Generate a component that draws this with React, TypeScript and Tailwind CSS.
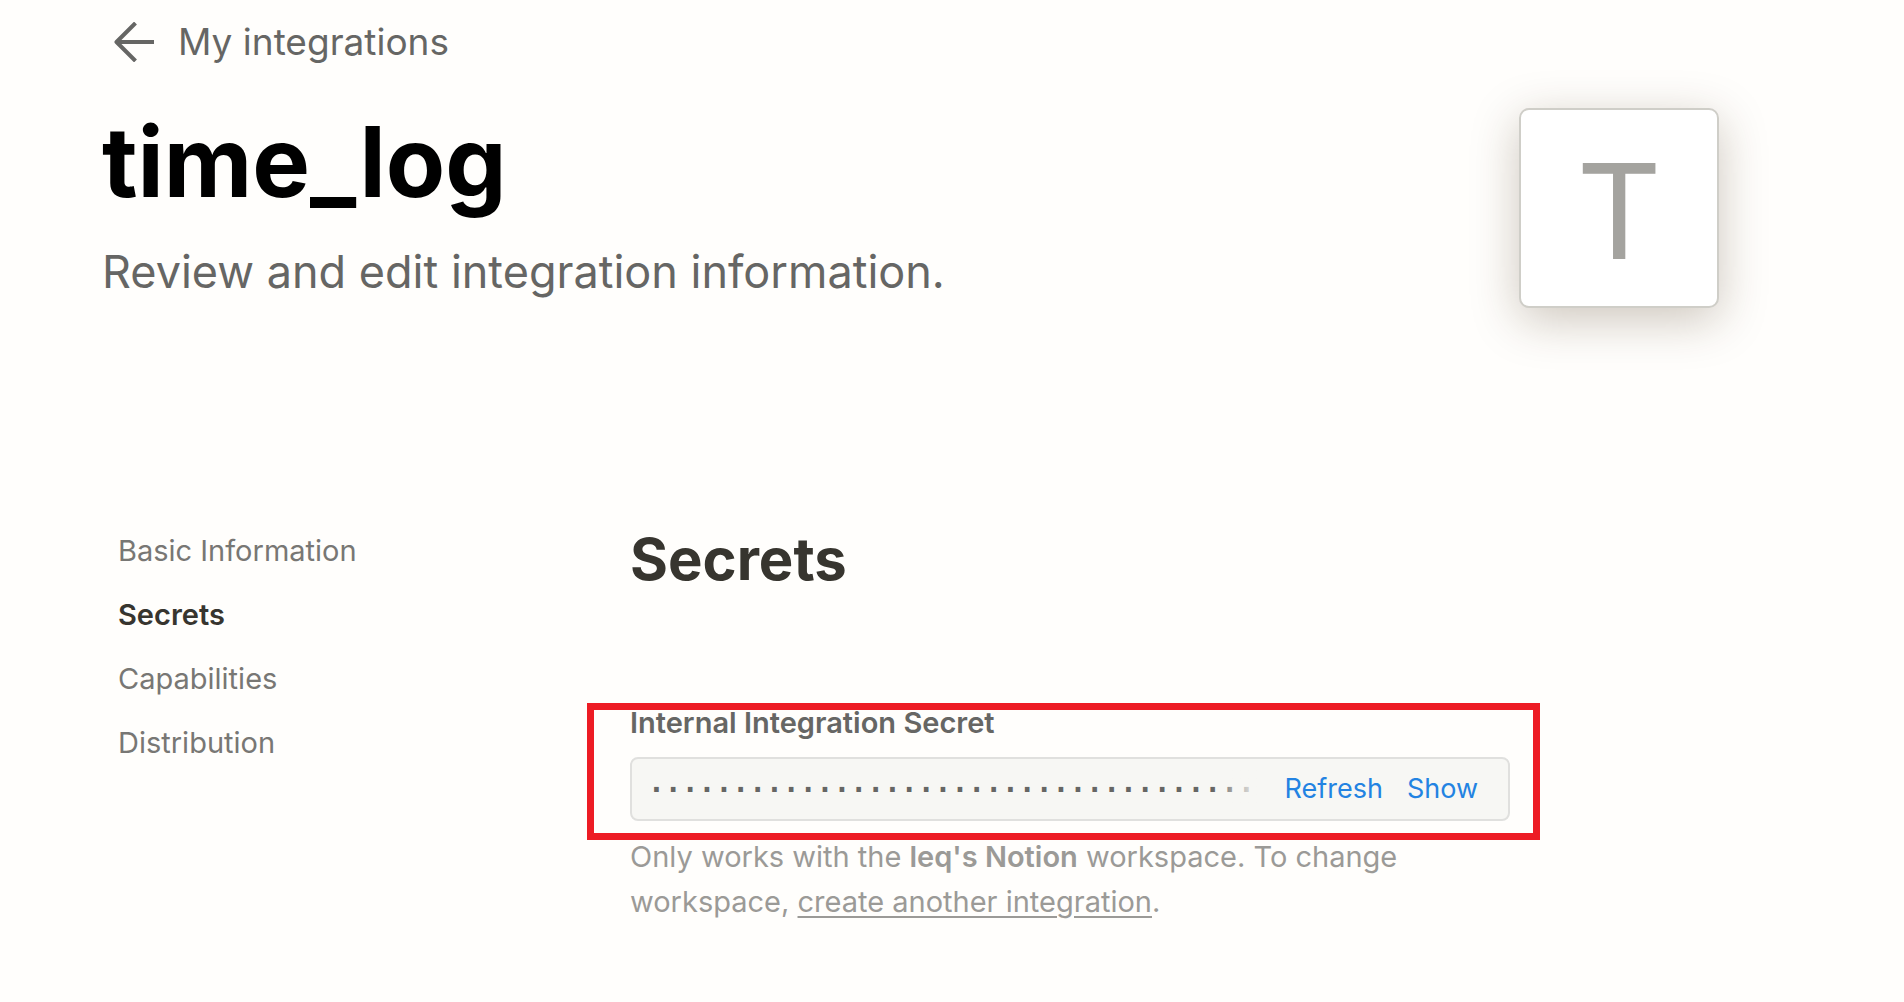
const navItems = [
  { label: 'Basic Information', active: false },
  { label: 'Secrets', active: true },
  { label: 'Capabilities', active: false },
  { label: 'Distribution', active: false },
];

const maskedSecret = '·'.repeat(36);

function BackArrow() {
  return (
    <svg
      viewBox="0 0 40 40"
      className="size-10 shrink-0"
      fill="none"
      stroke="currentColor"
      strokeWidth="4"
      aria-hidden="true"
    >
      <path d="M40 20H3" />
      <path d="M21.5 1L2.500 20l19 19" strokeLinejoin="round" />
    </svg>
  );
}

function Header() {
  return (
    <header className="flex items-start justify-between">
      <div>
        <a href="#integrations" className="ml-3 flex h-21 items-center gap-6 text-[37px] leading-[48px] text-[#666664]">
          <BackArrow />
          My integrations
        </a>
        <h1 className="mt-[18px] text-[97px] leading-[120px] font-bold text-black">time_log</h1>
        <p className="mt-5 text-[45px] leading-[60px] text-[#666664]">
          Review and edit integration information.
        </p>
      </div>
      <div className="mt-27 flex size-50 shrink-0 items-center justify-center rounded-[10px] border-2 border-[#cfcec8] bg-white pt-1.5 text-[132px] leading-none text-[#a4a39f] shadow-[0_12px_48px_rgba(60,40,10,0.26)]">
        T
      </div>
    </header>
  );
}

function SideNav() {
  return (
    <nav className="w-[528px] shrink-0 pl-4">
      <ul className="text-[29px] leading-[64px]">
        {navItems.map((item) => (
          <li key={item.label}>
            <a
              href={'#' + item.label}
              className={item.active ? 'font-semibold text-[#37352f]' : 'text-[#787774]'}
            >
              {item.label}
            </a>
          </li>
        ))}
      </ul>
    </nav>
  );
}

function SecretField() {
  return (
    <div className="relative mt-[102px]">
      <label htmlFor="secret" className="block text-[29px] leading-[44px] font-semibold text-[#666664]">
        Internal Integration Secret
      </label>
      <div className="mt-3 flex h-16 items-center gap-6 rounded-lg border-2 border-[#e0e0de] bg-[#f7f7f4] pr-[30px] pl-4">
        <div className="relative min-w-0 flex-1">
          <input
            id="secret"
            type="text"
            readOnly
            value={maskedSecret}
            className="block h-14 w-full bg-transparent font-['DejaVu_Sans_Mono',monospace] text-[28px] font-bold text-[#666664] outline-none"
          />
          <div className="pointer-events-none absolute inset-y-0 right-0 w-12 bg-linear-to-r from-[#f7f7f4]/0 to-[#f7f7f4]" />
        </div>
        <button type="button" className="text-[27px] leading-[40px] text-[#2383e2]">Refresh</button>
        <button type="button" className="text-[27px] leading-[40px] text-[#2383e2]">Show</button>
      </div>
      <div className="pointer-events-none absolute top-0.5 -right-[30px] -bottom-[19px] -left-[43px] border-[7px] border-[#ed1c24]" />
    </div>
  );
}

export default function App() {
  return (
    <div className="min-h-screen bg-[#fffefc] pr-[185px] pb-16 pl-[102px] font-['Inter',sans-serif]">
      <Header />
      <div className="mt-[211px] flex items-start">
        <SideNav />
        <main className="max-w-[880px] min-w-0 flex-1">
          <h2 className="text-[58px] leading-[80px] font-bold text-[#37352f]">Secrets</h2>
          <SecretField />
          <p className="mt-[13px] pr-20 text-[29px] leading-[45px] text-[#9b9a97]">
            Only works with the <strong className="font-semibold">leq's Notion</strong> workspace. To change
            workspace, <a href="#create" className="underline decoration-2 underline-offset-4">create another integration</a>.
          </p>
        </main>
      </div>
    </div>
  );
}
